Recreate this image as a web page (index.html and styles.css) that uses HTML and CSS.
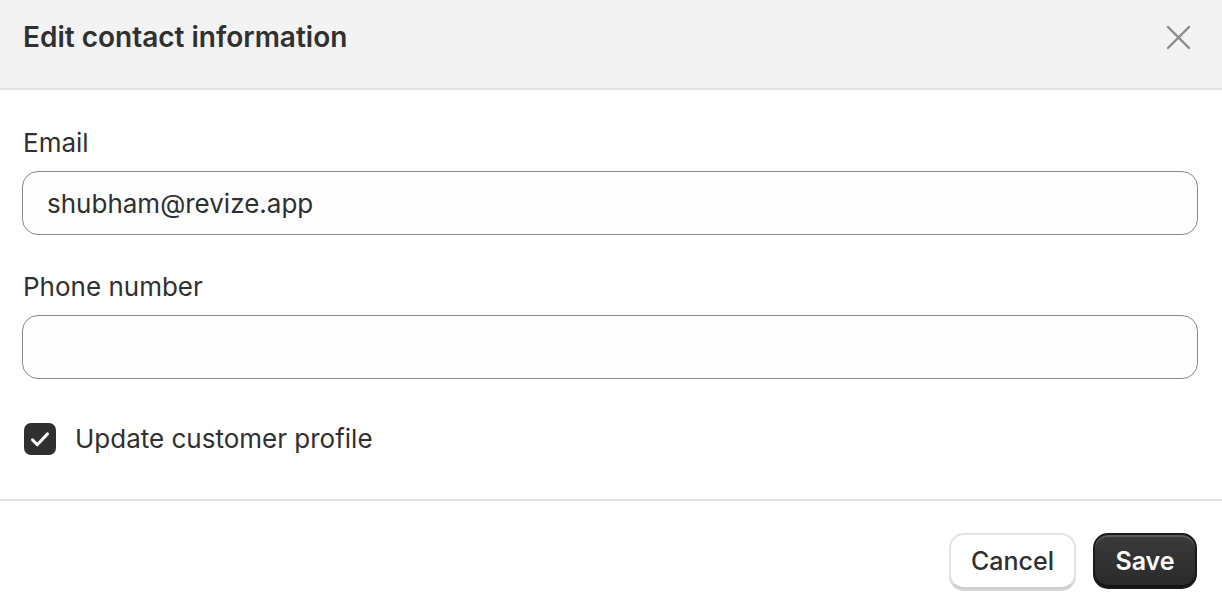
FILE: index.html
```html
<!DOCTYPE html>
<html>
<head>
<meta charset="utf-8">
<link rel="stylesheet" href="styles.css">
</head>
<body>
<div class="modal">
  <header class="modal-header">
    <h2 class="modal-title">Edit contact information</h2>
    <button class="close-btn" aria-label="Close">
      <svg viewBox="0 0 20 20" width="35" height="35"><path d="M4 4l12 12M16 4L4 16" stroke="#8a8a8a" stroke-width="1.4" stroke-linecap="round" fill="none"/></svg>
    </button>
  </header>
  <section class="modal-body">
    <div class="field">
      <label class="field-label">Email</label>
      <div class="input">shubham@revize.app</div>
    </div>
    <div class="field">
      <label class="field-label">Phone number</label>
      <div class="input"></div>
    </div>
    <label class="checkbox-row">
      <span class="checkbox">
        <svg viewBox="0 0 20 20" width="30" height="30"><path d="M5 10.6l3.2 3.2L15 6.6" stroke="#fff" stroke-width="2" stroke-linecap="round" stroke-linejoin="round" fill="none"/></svg>
      </span>
      <span class="checkbox-label">Update customer profile</span>
    </label>
  </section>
  <footer class="modal-footer">
    <button class="btn btn-secondary">Cancel</button>
    <button class="btn btn-primary">Save</button>
  </footer>
</div>
</body>
</html>
```
FILE: styles.css
```css
* { box-sizing: border-box; }
html, body { margin: 0; padding: 0; background: #fff; }
body {
  font-family: Inter, "Noto Sans", sans-serif;
  color: #303030;
  width: 1222px;
  height: 612px;
  overflow: hidden;
}
.modal { display: flex; flex-direction: column; }
.modal-header {
  height: 90px;
  background: #f3f3f3;
  border-bottom: 2px solid #e3e3e3;
  display: flex;
  align-items: center;
  justify-content: space-between;
  padding: 0 26px 14px 23px;
}
.modal-title {
  margin: 0;
  font-size: 28px;
  font-weight: 600;
  color: #303030;
}
.close-btn {
  background: none;
  border: none;
  padding: 0;
  width: 35px;
  height: 35px;
  display: flex;
  align-items: center;
  justify-content: center;
}
.modal-body {
  padding: 36px 24px 44px 22px;
  border-bottom: 2px solid #e3e3e3;
  display: flex;
  flex-direction: column;
}
.field { display: flex; flex-direction: column; margin-bottom: 35px; }
.field-label {
  font-size: 26px;
  line-height: 34px;
  padding-left: 1px;
  margin-bottom: 11px;
  color: #303030;
}
.input {
  height: 64px;
  border: 1.5px solid #8a8a8a;
  border-radius: 16px;
  background: #fdfdfd;
  padding: 0 24px;
  display: flex;
  align-items: center;
  font-size: 26px;
  color: #303030;
}
.checkbox-row {
  display: flex;
  align-items: center;
  gap: 19px;
  padding-left: 2px;
  margin-top: 9px;
}
.checkbox {
  width: 32px;
  height: 32px;
  border-radius: 7px;
  background: #303030;
  display: flex;
  align-items: center;
  justify-content: center;
}
.checkbox-label { font-size: 26px; line-height: 32px; }
.modal-footer {
  display: flex;
  justify-content: flex-end;
  gap: 17px;
  padding: 32px 25px 0 0;
}
.btn {
  height: 56px;
  border-radius: 15px;
  font-family: Inter, "Noto Sans", sans-serif;
  font-size: 25px;
  padding: 0;
}
.btn-secondary {
  background: #fff;
  color: #303030;
  font-weight: 550;
  border: 2px solid #e3e3e3;
  border-bottom-color: #cfcfcf;
  box-shadow: 0 2px 0 #d4d4d4;
  width: 127px;
}
.btn-primary {
  background: linear-gradient(#3a3a3a, #2a2a2a);
  color: #fff;
  font-weight: 600;
  border: 2px solid #1a1a1a;
  box-shadow: inset 0 2px 0 rgba(255,255,255,0.18), inset 0 -2px 0 rgba(0,0,0,0.5);
  width: 104px;
}
```
